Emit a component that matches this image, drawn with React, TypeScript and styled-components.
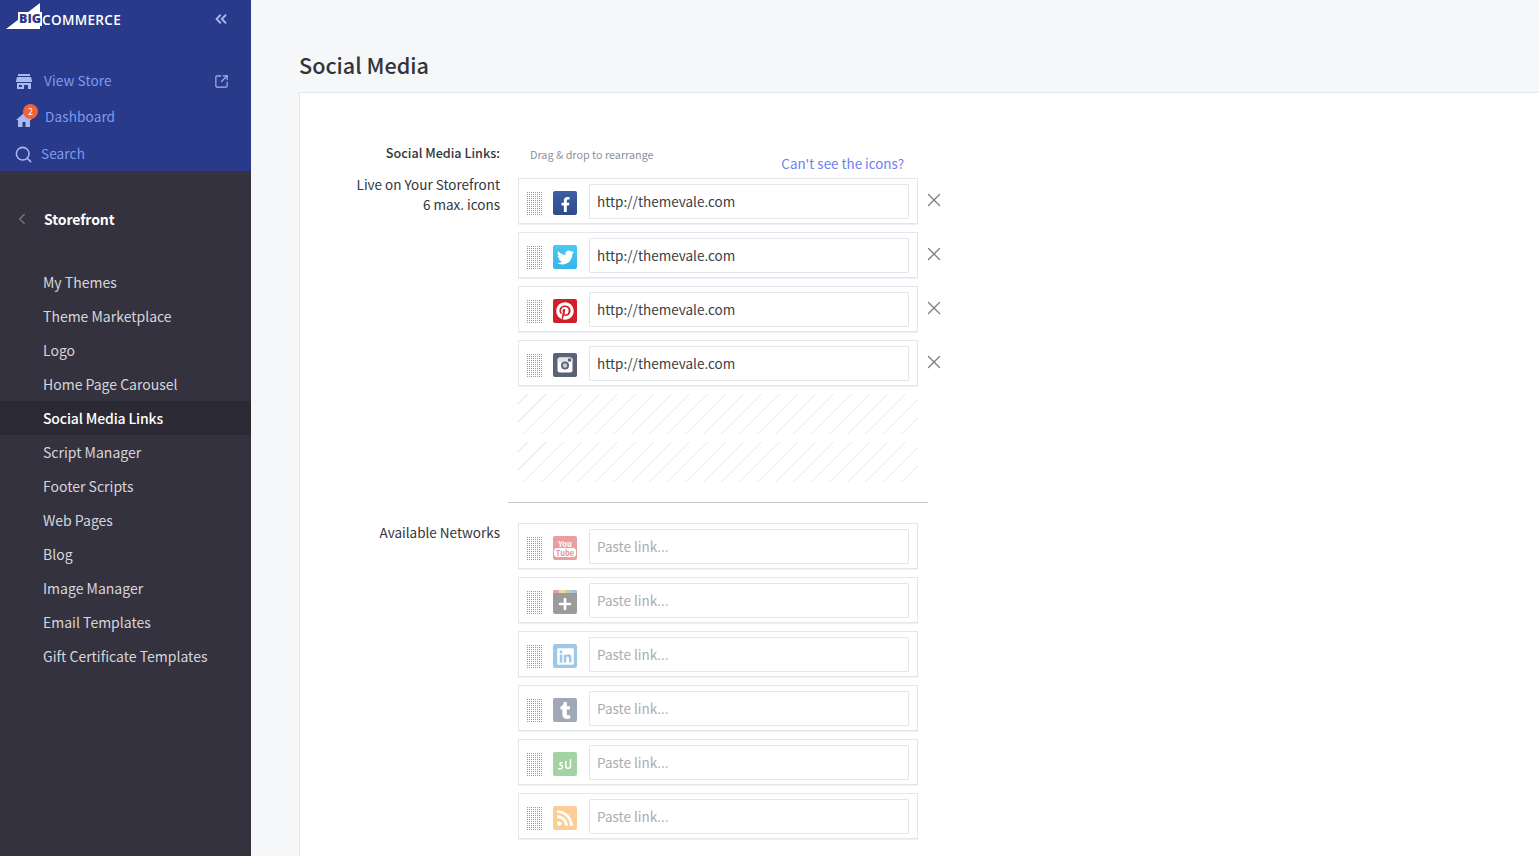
import React from 'react';
import styled, { createGlobalStyle } from 'styled-components';
import { ChevronLeft, ChevronsLeft, Search, SquareArrowOutUpRight, X } from 'lucide-react';
import { FaFacebookF, FaLinkedin, FaPinterest, FaPlus, FaRss, FaTumblr, FaTwitter } from 'react-icons/fa';

const FONT = `"Noto Sans CJK SC", "Open Sans", sans-serif`;

const GlobalStyle = createGlobalStyle`
  html, body {
    margin: 0;
    height: 100%;
    overflow: hidden;
  }
  body {
    font-family: ${FONT};
    background: #f6f7f9;
  }
  * {
    box-sizing: border-box;
  }
`;

const Page = styled.div`
  display: flex;
  height: 856px;
  overflow: hidden;
`;

const Sidebar = styled.aside`
  flex: 0 0 251px;
  background: #35323f;
`;

const TopBlock = styled.div`
  height: 171px;
  background: #283a89;
`;

const LogoRow = styled.div`
  display: flex;
  align-items: center;
  justify-content: space-between;
  height: 38px;
  margin-bottom: 25px;
  padding: 0 21px 0 6px;
  color: #a9b8ee;
`;

const Logo = styled.div`
  position: relative;
  display: flex;
  align-items: flex-start;
  width: 116px;
  height: 38px;
  padding-top: 3px;
`;

const LogoBig = styled.span`
  position: absolute;
  left: 12px;
  top: 12px;
  padding: 0 1px;
  background: #fff;
  font: 800 12.5px/14px "Open Sans", sans-serif;
  color: #283a89;
`;

const LogoCommerce = styled.span`
  position: absolute;
  left: 36px;
  top: 12px;
  font: 600 13.5px/16px "Open Sans", sans-serif;
  letter-spacing: 0.35px;
  color: #fff;
`;

const TopLink = styled.div<{ $gap: number }>`
  display: flex;
  align-items: center;
  height: 36px;
  padding: 0 22px 0 16px;
  gap: ${({ $gap }) => $gap}px;
  font-size: 13.6px;
  line-height: 20px;
  letter-spacing: 0.1px;
  color: #7e9cf0;

  svg {
    flex: none;
    color: #a9b8ee;
  }

  & + & + & {
    margin-top: 1px;
  }
`;

const TopLinkText = styled.span`
  flex: 1;
  padding-bottom: 2px;
`;

const SearchGlyph = styled(Search)`
  margin-left: -2px;
`;

const HomeIcon = styled.span`
  position: relative;
  display: flex;
  width: 17px;
  height: 14px;
  margin-top: 5px;
`;

const Badge = styled.span`
  position: absolute;
  left: 7px;
  top: -9px;
  width: 15px;
  height: 15px;
  border-radius: 50%;
  background: #f1613a;
  font-size: 9px;
  line-height: 15px;
  text-align: center;
  color: #fff;
`;

const SectionTitle = styled.div`
  display: flex;
  align-items: center;
  gap: 13px;
  height: 32px;
  margin-top: 32px;
  margin-bottom: 30px;
  padding-left: 13px;
  font-size: 14px;
  font-weight: 700;
  line-height: 20px;
  letter-spacing: -0.1px;
  color: #fff;

  svg {
    color: #77757f;
  }
`;

const NavList = styled.nav`
  display: flex;
  flex-direction: column;
`;

const NavItem = styled.a<{ $active?: boolean }>`
  display: block;
  height: 34px;
  padding-left: 43px;
  font-size: 14px;
  line-height: 35px;
  letter-spacing: ${({ $active }) => ($active ? '-0.15px' : '0')};
  color: ${({ $active }) => ($active ? '#fff' : '#d6d6da')};
  font-weight: ${({ $active }) => ($active ? 500 : 400)};
  background: ${({ $active }) => ($active ? '#2b2933' : 'transparent')};
`;

const Main = styled.main`
  flex: 1;
  min-width: 0;
  padding: 50px 0 0 48px;
`;

const Heading = styled.h1`
  margin: 0 0 12px;
  font-size: 21.6px;
  font-weight: 500;
  line-height: 30px;
  color: #31343a;
`;

const Card = styled.section`
  width: 1300px;
  padding: 52px 0 60px;
  background: #fff;
  border: 1px solid #e6e8eb;
`;

const FormGrid = styled.div`
  display: grid;
  grid-template-columns: 200px 430px;
  column-gap: 18px;
  color: #33363c;
`;

const HeadLabel = styled.div`
  height: 33px;
  font-size: 12.6px;
  font-weight: 500;
  line-height: 16px;
  text-align: right;
`;

const HintRow = styled.div`
  display: flex;
  justify-content: space-between;
  width: 386px;
  padding-left: 12px;
`;

const Hint = styled.span`
  margin-top: 1px;
  font-size: 10.8px;
  line-height: 16px;
  color: #8e9197;
`;

const HelpLink = styled.a`
  margin-top: 8px;
  font-size: 13.4px;
  line-height: 20px;
  color: #6f80f1;
`;

const SideLabel = styled.div<{ $offset: number }>`
  margin-top: ${({ $offset }) => $offset}px;
  font-size: 13.5px;
  line-height: 20px;
  text-align: right;
`;

const RowStack = styled.div`
  display: flex;
  flex-direction: column;
  gap: 8px;
`;

const RowLine = styled.div`
  display: flex;
  align-items: flex-start;
`;

const Row = styled.div`
  display: flex;
  align-items: flex-start;
  width: 400px;
  height: 46px;
  padding: 5px 8px;
  background: #fff;
  border: 1px solid #e3e6ea;
  box-shadow: 0 1px 0 #edf0f4;
`;

const Handle = styled.div`
  flex: none;
  width: 15px;
  height: 25px;
  margin: 7px 11px 0 0;
  background-image: linear-gradient(#fff 50%, transparent 50%),
    linear-gradient(90deg, #9a9a9a 50%, #fff 50%);
  background-size: 2px 2px;
`;

const Icon = styled.div<{ $bg: string; $faded?: boolean }>`
  position: relative;
  flex: none;
  display: flex;
  align-items: center;
  justify-content: center;
  overflow: hidden;
  width: 24px;
  height: 24px;
  margin: 7px 12px 0 0;
  border-radius: 2px;
  color: #fff;
  background: ${({ $bg }) => $bg};
  opacity: ${({ $faded }) => ($faded ? 0.5 : 1)};
`;

const RainbowStrip = styled.div`
  position: absolute;
  left: 0;
  right: 0;
  top: 0;
  height: 3px;
  background: linear-gradient(90deg, #d8453a 0 25%, #e9b23a 25% 50%, #6fb04d 50% 75%, #4a86e0 75%);
`;

const YouTubeMark = styled.div`
  display: flex;
  flex-direction: column;
  align-items: center;
  font-size: 7.5px;
  font-weight: 700;
  line-height: 9px;
`;

const TubeText = styled.span`
  padding: 0 2px;
  border-radius: 3px;
  background: #fff;
  color: #c9282d;
`;

const LinkInput = styled.input`
  flex: none;
  width: 320px;
  height: 35px;
  padding: 0 7px 2px;
  border: 1px solid #e3e6ea;
  border-radius: 1px;
  outline: none;
  background: #fff;
  font-family: ${FONT};
  font-size: 13.5px;
  color: #3a3d43;

  &::placeholder {
    color: #a9adb3;
    opacity: 1;
  }
`;

const RemoveButton = styled.button`
  display: flex;
  flex: none;
  width: 22px;
  height: 22px;
  margin: 11px 0 0 5px;
  padding: 0;
  border: 0;
  background: none;
  color: #7c8086;
`;

const EmptySlot = styled.div`
  width: 400px;
  height: 40px;
  background: repeating-linear-gradient(
    -45deg,
    #fff 0 11.2px,
    #f2f2f2 11.2px 12.7px
  );
`;

const Divider = styled.hr`
  width: 420px;
  height: 1px;
  margin: 20px 0 20px -10px;
  border: 0;
  background: #c8c8c8;
`;

const StoreIcon = () => (
  <svg width="16" height="15" viewBox="0 0 16 15" fill="currentColor">
    <path d="M2 0h12v2H2zM1 3h14l1 4v1H0V7zM1 9h14v6h-3v-4H8v4H1zM3 11v2h3v-2z" fillRule="evenodd" />
  </svg>
);

const HouseIcon = () => (
  <svg width="16" height="14" viewBox="0 0 16 14" fill="currentColor">
    <path d="M8 0 0 7h2v7h4.500V9h3v5H14V7h2z" />
  </svg>
);

const CameraIcon = () => (
  <svg width="16" height="16" viewBox="0 0 16 16">
    <rect x="0.5" y="0.5" width="15" height="15" rx="2.5" fill="#fff" />
    <rect x="0.5" y="0.5" width="15" height="4.5" rx="2" fill="#e3e4ea" />
    <rect x="11" y="1.5" width="3" height="3" fill="#5b6178" />
    <circle cx="8" cy="8.5" r="4" fill="#5b6178" />
    <circle cx="8" cy="8.5" r="2.2" fill="#c9ccd8" />
  </svg>
);

const StumbleIcon = () => (
  <svg width="16" height="14" viewBox="0 0 20 18" fill="none" stroke="#fff" strokeWidth="2">
    <path d="M1 15h4c2.400 0 2.400-4 0-4.200C3 10.500 3 7.500 5 7.500h2" />
    <path d="M11 5v6.500c0 4 6 4 6 0V3" />
  </svg>
);

const navItems = [
  'My Themes',
  'Theme Marketplace',
  'Logo',
  'Home Page Carousel',
  'Social Media Links',
  'Script Manager',
  'Footer Scripts',
  'Web Pages',
  'Blog',
  'Image Manager',
  'Email Templates',
  'Gift Certificate Templates',
];

const liveNetworks = [
  { bg: 'linear-gradient(#3d5fa6, #2f4a8c)', icon: <FaFacebookF size={15} style={{ marginTop: 2 }} /> },
  { bg: 'linear-gradient(#4cc7f2, #35b5e8)', icon: <FaTwitter size={17} /> },
  { bg: '#cf2029', icon: <FaPinterest size={18} /> },
  { bg: '#5b6178', icon: <CameraIcon /> },
];

const availableNetworks = [
  {
    bg: '#d9403f',
    icon: (
      <YouTubeMark>
        <span>You</span>
        <TubeText>Tube</TubeText>
      </YouTubeMark>
    ),
  },
  {
    bg: '#3a3a3a',
    icon: (
      <>
        <RainbowStrip />
        <FaPlus size={14} style={{ marginTop: 3 }} />
      </>
    ),
  },
  { bg: '#3d95cf', icon: <FaLinkedin size={19} /> },
  { bg: '#42566d', icon: <FaTumblr size={17} /> },
  { bg: '#49a848', icon: <StumbleIcon /> },
  { bg: '#fb9d2c', icon: <FaRss size={18} /> },
];

export default function App() {
  return (
    <>
      <GlobalStyle />
      <Page>
        <Sidebar>
          <TopBlock>
            <LogoRow>
              <Logo>
                <svg width="34" height="26" viewBox="0 0 34 26">
                  <path d="M0 26 34 0v26z" fill="#fff" />
                </svg>
                <LogoBig>BIG</LogoBig>
                <LogoCommerce>COMMERCE</LogoCommerce>
              </Logo>
              <ChevronsLeft size={18} strokeWidth={2.4} />
            </LogoRow>
            <TopLink $gap={12}>
              <StoreIcon />
              <TopLinkText>View Store</TopLinkText>
              <SquareArrowOutUpRight size={15} strokeWidth={1.8} />
            </TopLink>
            <TopLink $gap={12}>
              <HomeIcon>
                <HouseIcon />
                <Badge>2</Badge>
              </HomeIcon>
              <TopLinkText>Dashboard</TopLinkText>
            </TopLink>
            <TopLink $gap={8}>
              <SearchGlyph size={19} strokeWidth={2} />
              <TopLinkText>Search</TopLinkText>
            </TopLink>
          </TopBlock>
          <SectionTitle>
            <ChevronLeft size={18} strokeWidth={1.8} />
            Storefront
          </SectionTitle>
          <NavList>
            {navItems.map((item) => (
              <NavItem key={item} $active={item === 'Social Media Links'}>
                {item}
              </NavItem>
            ))}
          </NavList>
        </Sidebar>
        <Main>
          <Heading>Social Media</Heading>
          <Card>
            <FormGrid>
              <HeadLabel>Social Media Links:</HeadLabel>
              <HintRow>
                <Hint>Drag &amp; drop to rearrange</Hint>
                <HelpLink>Can't see the icons?</HelpLink>
              </HintRow>
              <SideLabel $offset={-4}>
                Live on Your Storefront
                <br />6 max. icons
              </SideLabel>
              <div>
                <RowStack>
                  {liveNetworks.map((network, i) => (
                    <RowLine key={i}>
                      <Row>
                        <Handle />
                        <Icon $bg={network.bg}>{network.icon}</Icon>
                        <LinkInput readOnly value="http://themevale.com" />
                      </Row>
                      <RemoveButton>
                        <X size={22} strokeWidth={1.5} />
                      </RemoveButton>
                    </RowLine>
                  ))}
                  <EmptySlot />
                  <EmptySlot />
                </RowStack>
                <Divider />
              </div>
              <SideLabel $offset={-1}>Available Networks</SideLabel>
              <RowStack>
                {availableNetworks.map((network, i) => (
                  <Row key={i}>
                    <Handle />
                    <Icon $bg={network.bg} $faded>
                      {network.icon}
                    </Icon>
                    <LinkInput readOnly placeholder="Paste link..." />
                  </Row>
                ))}
              </RowStack>
            </FormGrid>
          </Card>
        </Main>
      </Page>
    </>
  );
}
